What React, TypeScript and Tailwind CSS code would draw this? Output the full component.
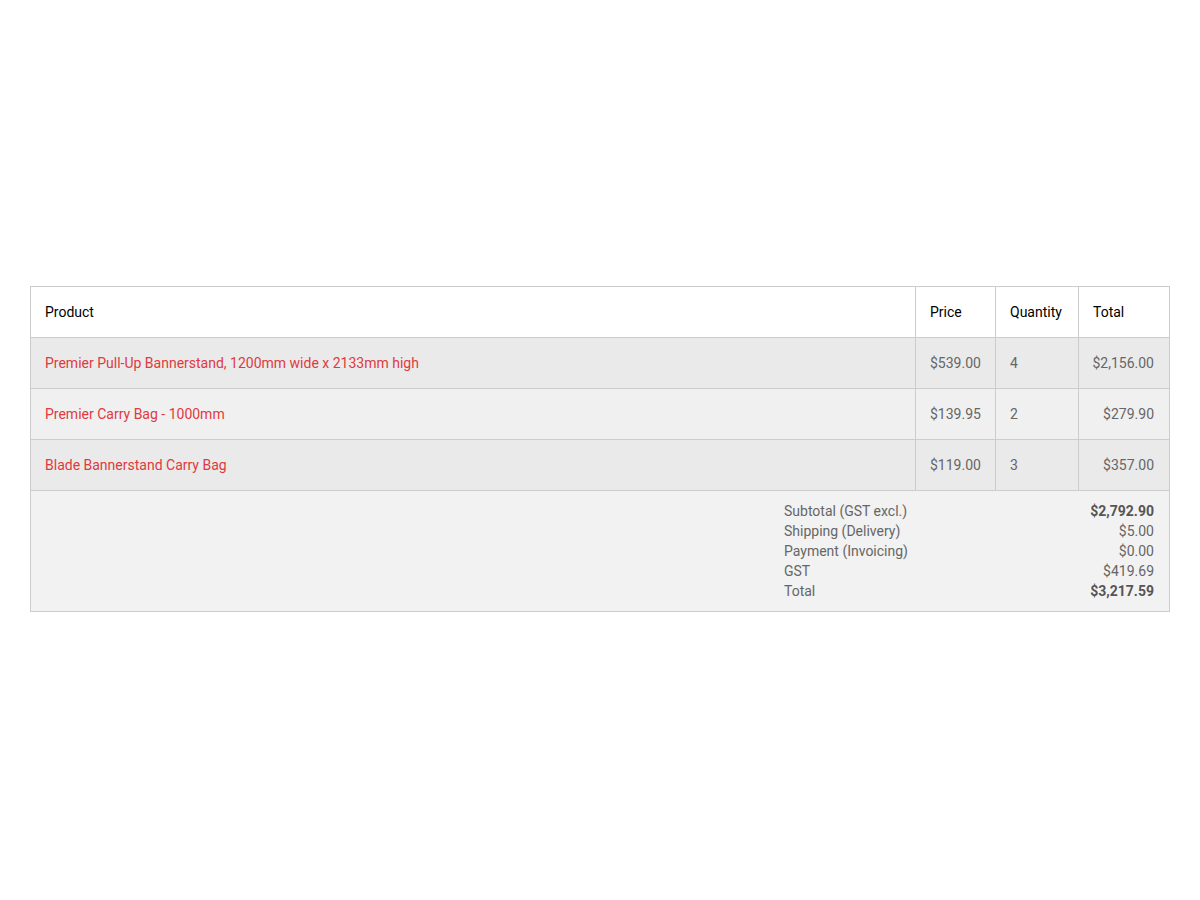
import React from 'react';

interface LineItem {
  name: string;
  price: string;
  qty: number;
  total: string;
}

const items: LineItem[] = [
  { name: 'Premier Pull-Up Bannerstand, 1200mm wide x 2133mm high', price: '$539.00', qty: 4, total: '$2,156.00' },
  { name: 'Premier Carry Bag - 1000mm', price: '$139.95', qty: 2, total: '$279.90' },
  { name: 'Blade Bannerstand Carry Bag', price: '$119.00', qty: 3, total: '$357.00' },
];

const summary = [
  { label: 'Subtotal (GST excl.)', value: '$2,792.90', bold: true },
  { label: 'Shipping (Delivery)', value: '$5.00', bold: false },
  { label: 'Payment (Invoicing)', value: '$0.00', bold: false },
  { label: 'GST', value: '$419.69', bold: false },
  { label: 'Total', value: '$3,217.59', bold: true },
];

export default function App() {
  return (
    <div
      className="min-h-screen bg-white px-[30px] pt-[286px] text-[14px]"
      style={{ fontFamily: 'Roboto, "Liberation Sans", sans-serif' }}
    >
      <table className="w-full table-fixed border-collapse border border-[#cccccc]">
        <thead>
          <tr className="h-[51px] bg-white text-black">
            <th className="border border-[#cccccc] pl-[14px] text-left font-normal">Product</th>
            <th className="w-[80px] border border-[#cccccc] pl-[14px] text-left font-normal">Price</th>
            <th className="w-[83px] border border-[#cccccc] pl-[14px] text-left font-normal">Quantity</th>
            <th className="w-[91px] border border-[#cccccc] pl-[14px] text-left font-normal">Total</th>
          </tr>
        </thead>
        <tbody>
          {items.map((item, i) => (
            <tr key={item.name} className={`h-[51px] ${i % 2 === 0 ? 'bg-[#eaeaea]' : 'bg-[#f0f0f0]'}`}>
              <td className="border border-[#cccccc] pl-[14px] text-[#e0393e]">{item.name}</td>
              <td className="border border-[#cccccc] pl-[14px] text-[#666666]">{item.price}</td>
              <td className="border border-[#cccccc] pl-[14px] text-[#666666]">{item.qty}</td>
              <td className="border border-[#cccccc] pr-[15px] text-right text-[#666666]">{item.total}</td>
            </tr>
          ))}
        </tbody>
        <tfoot>
          <tr className="bg-[#f2f2f2]">
            <td colSpan={4} className="border border-[#cccccc] pb-[10px] pl-[15px] pr-[15px] pt-[10px]">
              <div className="ml-auto w-[370px]">
                {summary.map((row) => (
                  <div key={row.label} className="flex h-[20px] items-center justify-between text-[#666666]">
                    <span>{row.label}</span>
                    <span className={row.bold ? 'font-bold text-[#555555]' : ''}>{row.value}</span>
                  </div>
                ))}
              </div>
            </td>
          </tr>
        </tfoot>
      </table>
    </div>
  );
}
